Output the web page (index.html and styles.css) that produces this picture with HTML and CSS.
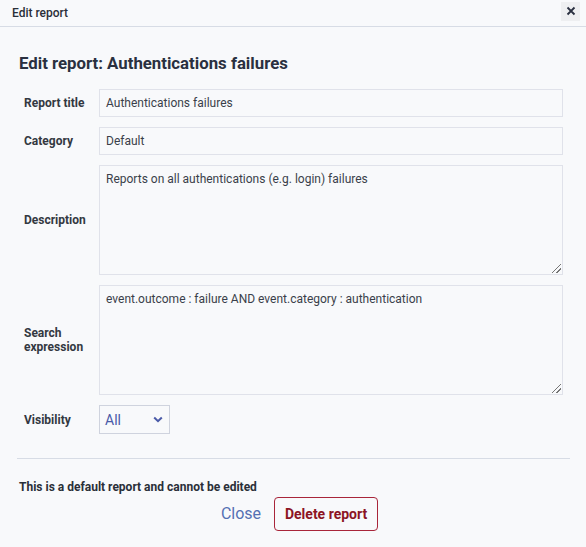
FILE: index.html
```html
<!DOCTYPE html>
<html>
<head>
<meta charset="utf-8">
<link rel="stylesheet" href="styles.css">
</head>
<body>
<div class="dialog">
  <div class="dlg-head">
    <span class="dlg-title">Edit report</span>
    <button class="x-btn" aria-label="Close">
      <svg width="10" height="10" viewBox="0 0 10 10"><path d="M1.5 1.5 L8.5 8.5 M8.5 1.5 L1.5 8.5" stroke="#2a3040" stroke-width="1.8" fill="none"/></svg>
    </button>
  </div>
  <div class="dlg-body">
    <h1 class="page-title">Edit report: Authentications failures</h1>
    <div class="form">
      <label class="lbl">Report title</label>
      <div class="field input">Authentications failures</div>
      <label class="lbl">Category</label>
      <div class="field input">Default</div>
      <label class="lbl">Description</label>
      <div class="field area">Reports on all authentications (e.g. login) failures<span class="grip"></span></div>
      <label class="lbl">Search<br>expression</label>
      <div class="field area">event.outcome : failure AND event.category : authentication<span class="grip"></span></div>
      <label class="lbl">Visibility</label>
      <div class="selwrap"><div class="select"><span>All</span>
        <svg width="10" height="7" viewBox="0 0 10 7"><path d="M1.2 1.5 L5 5.2 L8.8 1.5" stroke="#4a5aa8" stroke-width="2" fill="none"/></svg>
      </div></div>
    </div>
    <div class="sep"></div>
    <p class="note">This is a default report and cannot be edited</p>
    <div class="actions">
      <button class="btn-link">Close</button>
      <button class="btn-danger">Delete report</button>
    </div>
  </div>
</div>
</body>
</html>
```
FILE: styles.css
```css
html, body {
  margin: 0;
  padding: 0;
  background: #f8f9fb;
  font-family: Roboto, "Liberation Sans", sans-serif;
  color: #333841;
}
.dialog {
  width: 586px;
  height: 547px;
}
.dlg-head {
  height: 27px;
  border-bottom: 1px solid #d7dce5;
  display: flex;
  align-items: center;
  justify-content: space-between;
  padding: 0 6px 0 12px;
  box-sizing: border-box;
}
.dlg-title {
  font-size: 12px;
  font-weight: 500;
  color: #2a2f38;
  margin-top: -1px;
}
.x-btn {
  width: 19px;
  height: 19px;
  border: none;
  background: #eeeff1;
  display: flex;
  align-items: center;
  justify-content: center;
  padding: 0;
  margin-top: -4px;
}
.dlg-body {
  padding: 0 17px 0 18px;
}
.page-title {
  font-size: 16.8px;
  font-weight: 700;
  color: #2a3040;
  margin: 26px 0 0 1px;
  line-height: 20px;
}
.form {
  margin: 16px 6px 0 6px;
  display: grid;
  grid-template-columns: 75px 1fr;
  row-gap: 10px;
  align-items: center;
}
.lbl {
  font-size: 12px;
  font-weight: 700;
  color: #333841;
  line-height: 14px;
}
.field {
  border: 1px solid #e0e2ea;
  background: #f8f9fb;
  font-size: 12px;
  color: #3a3f4a;
  box-sizing: border-box;
  padding: 0 6px;
}
.input {
  height: 28px;
  line-height: 26px;
}
.area {
  height: 110px;
  padding-top: 6px;
  line-height: 14px;
  position: relative;
}
.grip {
  position: absolute;
  right: 1px;
  bottom: 1px;
  width: 9px;
  height: 9px;
  background: linear-gradient(135deg, transparent 45%, #777 45%, #777 53%, transparent 53%, transparent 72%, #777 72%, #777 80%, transparent 80%);
}
.selwrap {
  display: flex;
}
.select {
  width: 71px;
  height: 29px;
  box-sizing: border-box;
  border: 1px solid #cfd3de;
  display: flex;
  align-items: center;
  justify-content: space-between;
  padding: 0 6px 0 5px;
  font-size: 14px;
  color: #4a5aa8;
}
.sep {
  height: 1px;
  background: #d7dce5;
  margin: 24px -1px 0 -1px;
}
.note {
  font-size: 12px;
  font-weight: 700;
  color: #2a2f38;
  margin: 21px 0 0 1px;
  line-height: 14px;
}
.actions {
  display: flex;
  justify-content: center;
  align-items: center;
  gap: 1px;
  margin-top: 3px;
}
.btn-link {
  border: none;
  background: none;
  font-family: inherit;
  font-size: 16px;
  color: #5470b3;
  padding: 0 12px;
  height: 34px;
  margin-top: -2px;
}
.btn-danger {
  font-family: inherit;
  font-size: 14px;
  font-weight: 700;
  color: #8c1424;
  background: #f8f9fb;
  border: 1px solid #a8253a;
  border-radius: 4px;
  width: 104px;
  height: 34px;
  padding: 0;
}
```
